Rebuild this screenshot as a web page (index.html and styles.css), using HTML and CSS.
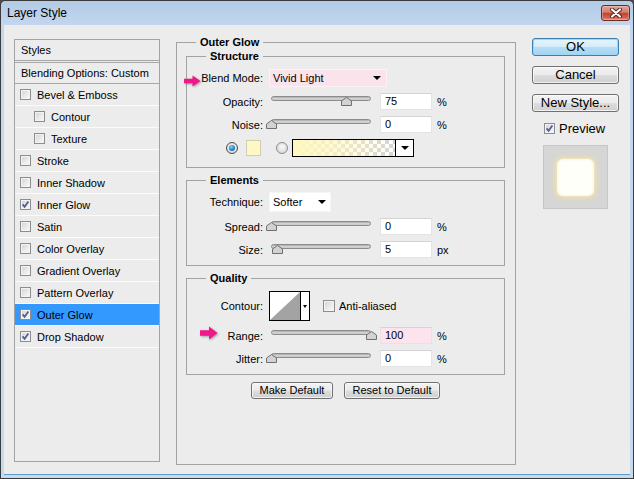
FILE: index.html
```html
<!DOCTYPE html>
<html lang="en">
<head>
<meta charset="utf-8">
<title>Layer Style</title>
<link rel="stylesheet" href="styles.css">
</head>
<body>
<div class="window">
  <div class="titlebar">
    <span class="title">Layer Style</span>
    <button class="close" aria-label="Close">
      <svg width="12" height="10" viewBox="0 0 12 10"><path d="M2 1.5 L10 8.5 M10 1.5 L2 8.5" stroke="#5a2119" stroke-width="4" stroke-linecap="round"/><path d="M2 1.5 L10 8.5 M10 1.5 L2 8.5" stroke="#fff" stroke-width="2.2" stroke-linecap="round"/></svg>
    </button>
  </div>
  <div class="client">
    <ul class="styles-list">
      <li class="head">Styles</li>
      <li class="blend">Blending Options: Custom</li>
      <li class="item"><span class="cb"></span>Bevel &amp; Emboss</li>
      <li class="item sub"><span class="cb"></span>Contour</li>
      <li class="item sub"><span class="cb"></span>Texture</li>
      <li class="item"><span class="cb"></span>Stroke</li>
      <li class="item"><span class="cb"></span>Inner Shadow</li>
      <li class="item"><span class="cb"><svg class="check" viewBox="0 0 9 9"><path d="M1.6 4.4 L3.6 6.8 L7.4 1.6"/></svg></span>Inner Glow</li>
      <li class="item"><span class="cb"></span>Satin</li>
      <li class="item"><span class="cb"></span>Color Overlay</li>
      <li class="item"><span class="cb"></span>Gradient Overlay</li>
      <li class="item"><span class="cb"></span>Pattern Overlay</li>
      <li class="item selected"><span class="cb"><svg class="check" viewBox="0 0 9 9"><path d="M1.6 4.4 L3.6 6.8 L7.4 1.6"/></svg></span>Outer Glow</li>
      <li class="item"><span class="cb"><svg class="check" viewBox="0 0 9 9"><path d="M1.6 4.4 L3.6 6.8 L7.4 1.6"/></svg></span>Drop Shadow</li>
    </ul>

    <fieldset class="group main">
      <legend>Outer Glow</legend>
      <div class="main-body">
        <fieldset class="group inner">
          <legend>Structure</legend>
          <div class="rows">
            <div class="row sel-row">
              <svg class="pointer p-blend" width="19" height="12" viewBox="0 0 19 12"><path d="M1 3.8 L9.5 3.8 L9.5 0.5 L17.5 6 L9.5 11.5 L9.5 8.2 L1 8.2 Z"/></svg>
              <span class="lbl">Blend Mode:</span>
              <div class="select pink">Vivid Light<span class="tri"></span></div>
            </div>
            <div class="row">
              <span class="lbl">Opacity:</span>
              <div class="slider"><div class="track"></div><svg class="thumb" style="--v:0.75" width="11" height="9" viewBox="0 0 11 9"><path d="M5.5 0.5 L10.5 4 L10.5 8.5 L0.5 8.5 L0.5 4 Z"/></svg></div>
              <div class="field">75</div><span class="unit">%</span>
            </div>
            <div class="row">
              <span class="lbl">Noise:</span>
              <div class="slider"><div class="track"></div><svg class="thumb" style="--v:0" width="11" height="9" viewBox="0 0 11 9"><path d="M5.5 0.5 L10.5 4 L10.5 8.5 L0.5 8.5 L0.5 4 Z"/></svg></div>
              <div class="field">0</div><span class="unit">%</span>
            </div>
            <div class="row color-row">
              <span class="radio on"></span>
              <span class="swatch"></span>
              <span class="radio"></span>
              <div class="gradient"><span class="grad-fill"></span><span class="grad-arrow"><span class="tri"></span></span></div>
            </div>
          </div>
        </fieldset>

        <fieldset class="group inner">
          <legend>Elements</legend>
          <div class="rows">
            <div class="row tech-row">
              <span class="lbl">Technique:</span>
              <div class="select white">Softer<span class="tri"></span></div>
            </div>
            <div class="row">
              <span class="lbl">Spread:</span>
              <div class="slider"><div class="track"></div><svg class="thumb" style="--v:0" width="11" height="9" viewBox="0 0 11 9"><path d="M5.5 0.5 L10.5 4 L10.5 8.5 L0.5 8.5 L0.5 4 Z"/></svg></div>
              <div class="field">0</div><span class="unit">%</span>
            </div>
            <div class="row">
              <span class="lbl">Size:</span>
              <div class="slider"><div class="track"></div><svg class="thumb" style="--v:0.06" width="11" height="9" viewBox="0 0 11 9"><path d="M5.5 0.5 L10.5 4 L10.5 8.5 L0.5 8.5 L0.5 4 Z"/></svg></div>
              <div class="field">5</div><span class="unit">px</span>
            </div>
          </div>
        </fieldset>

        <fieldset class="group inner">
          <legend>Quality</legend>
          <div class="rows quality">
            <div class="row contour-row">
              <span class="lbl">Contour:</span>
              <div class="contour">
                <svg class="curve" width="30" height="28" viewBox="0 0 30 28"><rect width="30" height="28" fill="#fff"/><path d="M0 28 L30 0 L30 28 Z" fill="#a3a3a3"/></svg>
                <span class="contour-drop"><span class="tri small"></span></span>
              </div>
              <span class="cb aa"></span><span class="aa-label">Anti-aliased</span>
            </div>
            <div class="row">
              <svg class="pointer p-range" width="20" height="14" viewBox="0 0 20 14"><path d="M1 4.3 L10 4.3 L10 0.5 L18.5 7 L10 13.5 L10 9.7 L1 9.7 Z"/></svg>
              <span class="lbl">Range:</span>
              <div class="slider"><div class="track"></div><svg class="thumb" style="--v:1" width="11" height="9" viewBox="0 0 11 9"><path d="M5.5 0.5 L10.5 4 L10.5 8.5 L0.5 8.5 L0.5 4 Z"/></svg></div>
              <div class="field pink">100</div><span class="unit">%</span>
            </div>
            <div class="row">
              <span class="lbl">Jitter:</span>
              <div class="slider"><div class="track"></div><svg class="thumb" style="--v:0" width="11" height="9" viewBox="0 0 11 9"><path d="M5.5 0.5 L10.5 4 L10.5 8.5 L0.5 8.5 L0.5 4 Z"/></svg></div>
              <div class="field">0</div><span class="unit">%</span>
            </div>
          </div>
        </fieldset>

        <div class="defaults">
          <button class="btn small make">Make Default</button>
          <button class="btn small reset">Reset to Default</button>
        </div>
      </div>
    </fieldset>

    <div class="side">
      <button class="btn big ok">OK</button>
      <button class="btn big">Cancel</button>
      <button class="btn big">New Style...</button>
      <div class="preview-toggle"><span class="cb"><svg class="check" viewBox="0 0 9 9"><path d="M1.6 4.4 L3.6 6.8 L7.4 1.6"/></svg></span><span>Preview</span></div>
      <div class="preview"><div class="glow-square"></div></div>
    </div>
  </div>
</div>
</body>
</html>
```

FILE: styles.css
```css
* { box-sizing: border-box; }

html, body {
  margin: 0;
  padding: 0;
}

body {
  width: 634px;
  height: 479px;
  overflow: hidden;
  background: #4a4a4a;
  font-family: "Liberation Sans", Arial, sans-serif;
  font-size: 11px;
  color: #000;
}

.window {
  width: 634px;
  height: 479px;
  border: 1px solid #3b3b3b;
  border-radius: 5px 5px 0 0;
  background: linear-gradient(#b3cbe6 0, #c2d7ee 24px, #c6daef 100%);
  padding: 0 3px 3px;
  display: flex;
  flex-direction: column;
}

.titlebar {
  height: 24px;
  flex: none;
  display: flex;
  align-items: center;
  justify-content: space-between;
  padding: 0 0 0 3px;
}

.title {
  font-size: 12px;
  color: #000;
}

.close {
  width: 29px;
  height: 16px;
  margin: 0;
  padding: 0;
  border: 1px solid #6d2b21;
  border-radius: 3px;
  background: linear-gradient(#e3a699 0%, #d47b6a 45%, #c0432f 52%, #cc5f4e 80%, #dd8c7c 100%);
  display: flex;
  align-items: center;
  justify-content: center;
  box-shadow: inset 0 0 0 1px rgba(255, 220, 210, 0.35);
}

.client {
  flex: 1;
  background: #ececec;
  display: flex;
  align-items: flex-start;
  padding: 14px 0 0 10px;
  border-bottom: 1px solid #5b9cd0;
}

/* ---------- left list ---------- */
.styles-list {
  list-style: none;
  margin: 0;
  padding: 0;
  width: 146px;
  height: 423px;
  flex: none;
  border: 1px solid #a3a3a3;
  background: #ececec;
}

.styles-list li {
  display: flex;
  align-items: center;
  padding-left: 6px;
  white-space: nowrap;
}

.styles-list .head {
  height: 23px;
  border-bottom: 3px double #a6a6a6;
}

.styles-list .blend {
  height: 21px;
  border-bottom: 1px solid #a9a9a9;
}

.styles-list .item {
  height: 22px;
  border-bottom: 1px solid #fbfbfb;
  padding-left: 5px;
  gap: 6px;
}

.styles-list .item.sub {
  padding-left: 19px;
}

.styles-list .item.selected {
  background: #3399ff;
}

.cb {
  width: 11px;
  height: 11px;
  flex: none;
  border: 1px solid #8d8d8d;
  background: linear-gradient(135deg, #d2d2d2 0%, #ececec 60%, #f9f9f9 100%);
  box-shadow: inset 0 0 0 1px #f3f3f3;
  display: flex;
  align-items: center;
  justify-content: center;
}

.check {
  width: 9px;
  height: 9px;
  display: block;
}

.check path {
  fill: none;
  stroke: #4a5c9c;
  stroke-width: 1.7;
}

/* ---------- group boxes ---------- */
.group {
  border: 1px solid #a3a3a3;
  margin: 0;
  min-width: 0;
}

.group > legend {
  font-weight: bold;
  line-height: 13px;
  padding: 0 4px;
}

.main {
  width: 340px;
  height: 429px;
  margin: -3px 0 0 16px;
  padding: 1px 10px 0 9px;
  flex: none;
}

.main > legend {
  margin-left: 10px;
}

.main-body {
  display: flex;
  flex-direction: column;
  gap: 6px;
}

.inner {
  padding: 0;
}

.inner > legend {
  margin-left: 19px;
}

.rows {
  display: flex;
  flex-direction: column;
  gap: 6px;
  padding: 6px 0 10px;
}

.inner:nth-child(2) .rows {
  padding: 5px 0 7px;
}

.rows.quality {
  padding: 6px 0 7px;
}

.row {
  position: relative;
  display: flex;
  align-items: center;
  height: 17px;
}

.lbl {
  width: 76px;
  text-align: right;
  flex: none;
}

.pointer {
  position: absolute;
  filter: drop-shadow(1px 1px 1px rgba(0, 0, 0, 0.35));
}

.pointer path {
  fill: #f0178a;
}

.p-blend {
  left: -4px;
  top: 6px;
}

.p-range {
  left: 12px;
  top: -1px;
}

/* select boxes */
.sel-row {
  height: 18px;
}

.tech-row {
  height: 20px;
}

.select {
  margin-left: 6px;
  height: 100%;
  display: flex;
  align-items: center;
  justify-content: space-between;
  padding: 0 5px 0 3px;
  border: 1px solid #f5f5f5;
}

.select.pink {
  width: 118px;
  background: #fbe3ec;
  border-color: #fdf1f5;
}

.select.white {
  width: 62px;
  background: #fff;
  padding-right: 4px;
}

.tri {
  width: 0;
  height: 0;
  border-left: 4px solid transparent;
  border-right: 4px solid transparent;
  border-top: 4px solid #000;
}

.tri.small {
  border-left-width: 2.5px;
  border-right-width: 2.5px;
  border-top-width: 3px;
}

/* sliders */
.slider {
  position: relative;
  width: 110px;
  height: 17px;
  margin-left: 3px;
  flex: none;
}

.track {
  margin: 3px 5px 0;
  height: 5px;
  border: 1px solid #8c8c8c;
  border-radius: 3px;
  background: linear-gradient(#a9a9a9, #d9d9d9 60%, #c3c3c3);
}

.thumb {
  position: absolute;
  top: 4px;
  left: calc(var(--v) * 100px);
}

.thumb path {
  fill: #d2d2d2;
  stroke: #6f6f6f;
  stroke-width: 1;
}

.field {
  width: 52px;
  height: 17px;
  margin-left: 4px;
  padding-left: 4px;
  line-height: 15px;
  background: #fff;
  border: 1px solid #e4e4e4;
  border-top-color: #d4d4d4;
  flex: none;
}

.field.pink {
  background: #fde3ee;
}

.unit {
  margin-left: 5px;
}

/* colour row */
.color-row {
  height: 18px;
  padding-left: 39px;
}

.radio {
  width: 12px;
  height: 12px;
  flex: none;
  border-radius: 50%;
  border: 1px solid #8c8c8c;
  background: radial-gradient(circle at 50% 40%, #fafafa 0, #dcdcdc 70%, #c8c8c8 100%);
  display: flex;
  align-items: center;
  justify-content: center;
}

.radio.on {
  border-color: #4a4a4a;
}

.radio.on::after {
  content: "";
  width: 6px;
  height: 6px;
  border-radius: 50%;
  background: radial-gradient(circle at 40% 35%, #8ad3ff 0, #2b8fd8 45%, #0d4f8c 100%);
}

.swatch {
  width: 15px;
  height: 16px;
  margin-left: 8px;
  background: #fff8c4;
  border: 1px solid #d0cdb2;
  flex: none;
}

.radio + .gradient {
  margin-left: 4px;
}

.swatch + .radio {
  margin-left: 15px;
}

.gradient {
  width: 122px;
  height: 18px;
  border: 1px solid #000;
  display: flex;
  flex: none;
}

.grad-fill {
  flex: 1;
  background:
    linear-gradient(to right, #fff8bf 0%, rgba(255, 248, 191, 0.7) 40%, rgba(255, 248, 191, 0) 100%),
    repeating-conic-gradient(#d4d4d4 0 25%, #ffffff 0 50%) 0 0 / 8px 8px;
}

.grad-arrow {
  width: 18px;
  border-left: 1px solid #000;
  background: #fff;
  display: flex;
  align-items: center;
  justify-content: center;
}

/* contour */
.contour-row {
  height: 30px;
}

.contour {
  margin-left: 6px;
  width: 41px;
  height: 30px;
  border: 1px solid #000;
  display: flex;
  flex: none;
}

.curve {
  display: block;
}

.contour-drop {
  width: 9px;
  border-left: 1px solid #000;
  background: #fff;
  display: flex;
  align-items: center;
  justify-content: center;
}

.cb.aa {
  margin-left: 13px;
  width: 12px;
  height: 12px;
}

.aa-label {
  margin-left: 4px;
}

/* buttons */
.btn {
  font-family: "Liberation Sans", Arial, sans-serif;
  color: #000;
  margin: 0;
  padding: 0;
  border: 1px solid #707070;
  border-radius: 3px;
  background: linear-gradient(#f3f3f3 0%, #ebebeb 48%, #dddddd 52%, #cfcfcf 100%);
  box-shadow: inset 0 0 0 1px rgba(255, 255, 255, 0.7);
}

.defaults {
  display: flex;
  justify-content: center;
  gap: 11px;
  margin-top: 1px;
}

.btn.small {
  height: 17px;
  font-size: 11px;
  line-height: 15px;
}

.btn.make {
  width: 82px;
}

.btn.reset {
  width: 96px;
}

.side {
  width: 87px;
  margin: -1px 0 0 16px;
  display: flex;
  flex-direction: column;
  flex: none;
}

.btn.big {
  width: 87px;
  height: 18px;
  font-size: 13px;
  line-height: 16px;
  margin-bottom: 10px;
}

.btn.ok {
  border-color: #3c7fb1;
  background: linear-gradient(#e5f4fc 0%, #d5edfa 48%, #b4ddf5 52%, #a3d4f1 100%);
  box-shadow: inset 0 0 0 1px #9cd5f8;
}

.preview-toggle {
  display: flex;
  align-items: center;
  gap: 4px;
  padding-left: 12px;
  font-size: 13px;
  height: 13px;
}

.preview {
  margin: 10px auto 0;
  width: 65px;
  height: 64px;
  background: #d6d6d6;
  border: 1px solid #c6c6c6;
  display: flex;
  align-items: center;
  justify-content: center;
}

.glow-square {
  width: 37px;
  height: 37px;
  border-radius: 6px;
  background: #fffffa;
  box-shadow: inset 0 0 3px rgba(245, 236, 190, 0.9), 0 0 3px 1px rgba(243, 232, 178, 0.9), 0 0 6px 2px rgba(238, 226, 170, 0.6);
}
```
